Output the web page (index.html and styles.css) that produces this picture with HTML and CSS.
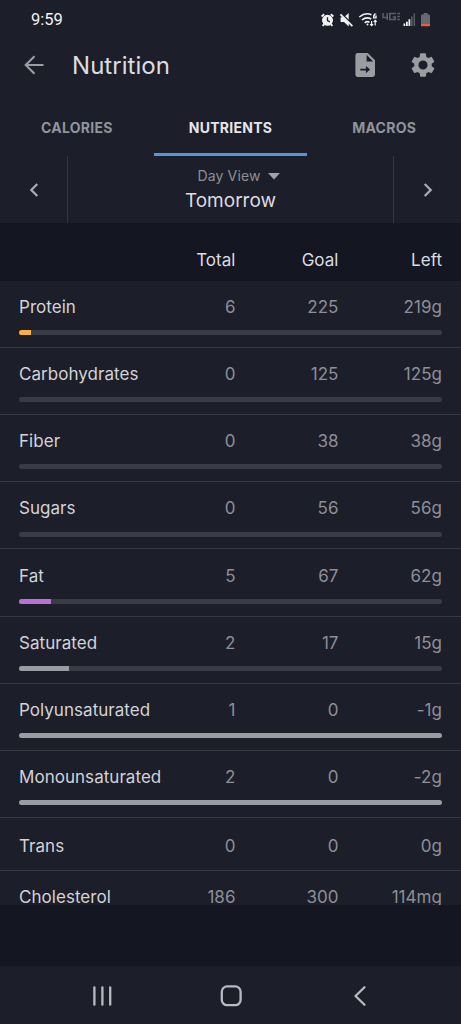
FILE: index.html
```html
<!DOCTYPE html>
<html lang="en">
<head>
<meta charset="utf-8">
<title>Nutrition</title>
<link rel="stylesheet" href="styles.css">
</head>
<body>
<div class="screen">
  <header class="status-bar">
    <span class="clock">9:59</span>
    <svg class="status-icons" width="114" height="18" viewBox="0 0 114 18">
      <g fill="none" stroke="#f2f2f4">
        <circle cx="7.500" cy="9.300" r="4.600" fill="#f2f2f4" stroke-width="1.800"/>
        <path d="M7.500 6.300v3.300l2.400 1.200" stroke="#1c1e29" stroke-width="1.300"/>
        <path d="M1.600 5.400l2.600-2.200M13.400 5.400l-2.600-2.200M4.200 13.200l-1.600 1.700M10.800 13.200l1.600 1.700" stroke-width="1.900"/>
        <path d="M20.600 6.300h3.400l4.700-4.300v13.400l-4.700-4.300h-3.400z" fill="#f2f2f4" stroke="none"/>
        <path d="M20.800 2.200l12 11.500" stroke="#1c1e29" stroke-width="1.600"/>
        <path d="M20.400 3.300l12 11.900" stroke-width="1.800"/>
        <path d="M39.300 6q6-5 12.200-2.200M41.900 9q4.500-3.700 9.300-1M44.700 11.800q2.600-2 4.800-.4" stroke-width="1.600"/>
        <circle cx="47.500" cy="13.500" r="1" fill="#f2f2f4" stroke="none"/>
        <path d="M56.300 3h-1.600q-1.400 1.600-1.200 3.800h2.600V5h-2.500" stroke-width="1.200"/>
        <path d="M51.600 10v4.600m-1.500-1.500l1.500 1.600 1.500-1.600M55.200 14.500V9.400m-1.500 1.500l1.500-1.600 1.500 1.600" stroke-width="1.200"/>
      </g>
      <g fill="none" stroke="#5c5e69" stroke-width="1.500">
        <path d="M63 2v4.500h5.200M67.200 2v7M76 2.600h-6.200v5.800h5.500V5.900h-2.600M77.200 2.600H80M77.200 5.500H80M77.200 8.400H80"/>
      </g>
      <path d="M83.500 12.600h1.800v2.300h-1.800zM86 10.800h1.800v4.100H86zM88.500 8.300h1.800v6.600h-1.800z" fill="#f2f2f4"/>
      <path d="M91 5.500h1.700v9.400H91zM93.500 2.500h1.600v12.400h-1.600z" fill="#565863"/>
      <path d="M103.600 2h4v1.600h1.500q.9 0 .9.900v9h-9v-9q0-.9.900-.9h1.700z" fill="#666873"/>
      <path d="M101 12.900h9v1.500q0 .9-.9.900h-7.200q-.9 0-.9-.9z" fill="#e8603c"/>
    </svg>
  </header>

  <div class="app-bar">
    <svg class="back" width="22" height="22" viewBox="0 0 22 22" fill="none" stroke="#9c9ca3" stroke-width="2.100"><path d="M20.500 11H3M11.500 2.200L2.700 11l8.800 8.800"/></svg>
    <h1 class="title">Nutrition</h1>
    <svg class="export" width="20" height="24" viewBox="0 0 20 24"><path fill="#9c9ca3" fill-rule="evenodd" d="M2.600 0h10.200L20 7.300v14.300q0 2.400-2.400 2.400H2.600Q.4 24 .4 21.600V2.400Q.4 0 2.600 0zM11.600 1.800v6.700h6.600zM5.300 15.700v1.900h5.600v2.700l4.200-3.700-4.200-3.700v2.800z"/></svg>
    <svg class="settings" width="28" height="28" viewBox="0 0 24 24"><path fill="#9c9ca3" d="M19.430 12.980c.04-.32.07-.64.07-.98s-.03-.66-.07-.98l2.110-1.650c.19-.15.240-.42.120-.64l-2-3.460c-.12-.22-.39-.3-.61-.22l-2.490 1c-.52-.4-1.080-.73-1.690-.98l-.38-2.650C14.460 2.180 14.250 2 14 2h-4c-.25 0-.46.180-.49.420l-.38 2.650c-.61.250-1.170.59-1.690.98l-2.490-1c-.23-.09-.49 0-.61.220l-2 3.460c-.13.220-.07.490.12.640l2.110 1.650c-.04.320-.07.650-.07.980s.03.660.07.980l-2.110 1.650c-.19.150-.24.420-.12.640l2 3.460c.12.220.39.300.61.220l2.490-1c.52.400 1.080.730 1.690.980l.38 2.650c.03.240.24.420.49.420h4c.25 0 .46-.18.490-.42l.38-2.650c.61-.25 1.170-.59 1.690-.98l2.490 1c.23.090.490 0 .610-.22l2-3.460c.12-.22.070-.49-.12-.64zM12 15.900a3.900 3.900 0 1 1 0-7.800 3.900 3.900 0 0 1 0 7.800z"/></svg>
  </div>

  <nav class="tabs">
    <span class="tab">CALORIES</span>
    <span class="tab active">NUTRIENTS</span>
    <span class="tab">MACROS</span>
  </nav>

  <div class="day-picker">
    <div class="step"><svg width="12" height="16" viewBox="0 0 12 16" fill="none" stroke="#aaaab0" stroke-width="2.300"><path d="M9.300 2L3.300 8l6 6"/></svg></div>
    <div class="day">
      <div class="view">Day View <svg width="12" height="7" viewBox="0 0 12 7"><path d="M0 0h12L6 6.600z" fill="#a2a2a9"/></svg></div>
      <div class="date">Tomorrow</div>
    </div>
    <div class="step"><svg width="12" height="16" viewBox="0 0 12 16" fill="none" stroke="#aaaab0" stroke-width="2.300"><path d="M2.700 2l6 6-6 6"/></svg></div>
  </div>

  <div class="columns cells"><span></span><span>Total</span><span>Goal</span><span>Left</span></div>

  <main class="list">
    <section class="row"><div class="cells"><b>Protein</b><span>6</span><span>225</span><span>219g</span></div><div class="bar"><i class="fill protein" style="width:2.800%"></i></div></section>
    <section class="row"><div class="cells"><b>Carbohydrates</b><span>0</span><span>125</span><span>125g</span></div><div class="bar"></div></section>
    <section class="row"><div class="cells"><b>Fiber</b><span>0</span><span>38</span><span>38g</span></div><div class="bar"></div></section>
    <section class="row"><div class="cells"><b>Sugars</b><span>0</span><span>56</span><span>56g</span></div><div class="bar"></div></section>
    <section class="row"><div class="cells"><b>Fat</b><span>5</span><span>67</span><span>62g</span></div><div class="bar"><i class="fill fat" style="width:7.500%"></i></div></section>
    <section class="row"><div class="cells"><b>Saturated</b><span>2</span><span>17</span><span>15g</span></div><div class="bar"><i class="fill" style="width:11.800%"></i></div></section>
    <section class="row"><div class="cells"><b>Polyunsaturated</b><span>1</span><span>0</span><span>-1g</span></div><div class="bar"><i class="fill" style="width:100%"></i></div></section>
    <section class="row"><div class="cells"><b>Monounsaturated</b><span>2</span><span>0</span><span>-2g</span></div><div class="bar"><i class="fill" style="width:100%"></i></div></section>
    <section class="row trans"><div class="cells"><b>Trans</b><span>0</span><span>0</span><span>0g</span></div></section>
    <section class="row"><div class="cells"><b>Cholesterol</b><span>186</span><span>300</span><span>114mg</span></div></section>
  </main>

  <div class="spacer"></div>

  <footer class="nav-bar">
    <svg width="22" height="22" viewBox="0 0 22 22" stroke="#b9bac1" stroke-width="2.300" stroke-linecap="round"><path d="M3.400 2.300v17.400M11.400 2.300v17.400M19.200 2.300v17.400"/></svg>
    <svg width="24" height="24" viewBox="0 0 24 24" fill="none" stroke="#b9bac1" stroke-width="2.300"><rect x="2.800" y="2.400" width="18.800" height="18.800" rx="5.300"/></svg>
    <svg width="22" height="22" viewBox="0 0 22 22" fill="none" stroke="#b9bac1" stroke-width="2.300" stroke-linecap="round" stroke-linejoin="round"><path d="M15.500 2.200L6.500 11l9 8.800"/></svg>
  </footer>
</div>
</body>
</html>
```
FILE: styles.css
```css
* { box-sizing: border-box; }
body { margin: 0; background: #141622; font-family: Inter, "Liberation Sans", sans-serif; }
svg { display: block; flex: none; }
.screen { width: 461px; height: 1024px; display: flex; flex-direction: column; overflow: hidden; background: #141622; color: #dcdce0; }
.status-bar { height: 38px; flex: none; display: flex; justify-content: space-between; align-items: center; padding: 0 27px 0 31px; background: #1c1e29; }
.clock { font: 16.5px Roboto, sans-serif; color: #f2f2f4; }
.status-icons { margin-top: 2px; }
.app-bar { height: 60px; flex: none; display: flex; align-items: center; padding: 0 24px 6px 23px; background: #1c1e29; }
.title { flex: 1; margin: 2px 0 0 27px; font-size: 24px; font-weight: 400; line-height: 30px; letter-spacing: .05px; }
.settings { margin-left: 34px; }
.tabs { height: 58px; flex: none; display: grid; grid-template-columns: repeat(3, 1fr); background: #1c1e29; }
.tab { display: flex; justify-content: center; align-items: center; padding-top: 4px; border-bottom: 3px solid transparent; font-size: 14px; font-weight: 700; letter-spacing: .25px; color: #92949b; }
.tab.active { color: #e6e6e9; border-color: #5593e5; }
.day-picker { height: 67px; flex: none; display: grid; grid-template-columns: 67px 1fr 67px; background: #1c1e29; }
.step { display: flex; justify-content: center; align-items: center; }
.day { display: flex; flex-direction: column; align-items: center; padding-top: 10px; border: solid #353741; border-width: 0 1px; }
.view { display: flex; align-items: center; gap: 7px; padding-left: 16px; font-size: 14px; line-height: 20px; letter-spacing: .15px; color: #8e8f97; }
.date { font-size: 19px; line-height: 30px; }
.cells { display: grid; grid-template-columns: 159.500px 57px 103px 103.500px; font-size: 17px; line-height: 24px; letter-spacing: .04px; }
.cells span { text-align: right; color: #8e8f97; }
.cells b { font-weight: 400; color: #d3d3d8; white-space: nowrap; }
.columns { height: 57.700px; flex: none; padding: 25px 19px 0; }
.columns span { color: #dcdce0; }
.list { height: 624.300px; flex: none; overflow: hidden; background: #1c1e29; }
.row { height: 67.200px; padding: 14.200px 19px 0; border-bottom: 1px solid #373842; }
.bar { height: 5px; margin-top: 11.100px; border-radius: 2.500px; background: #3a3b46; overflow: hidden; }
.fill { display: block; height: 100%; background: #9b9ca2; }
.protein { background: #fbb040; }
.fat { background: #bb70d8; }
.trans { height: 52.600px; padding-top: 15.500px; }
.spacer { flex: 1; }
.nav-bar { height: 58px; flex: none; display: flex; justify-content: space-between; align-items: center; padding: 2px 90px 0 91px; background: #1c1e29; }
```
